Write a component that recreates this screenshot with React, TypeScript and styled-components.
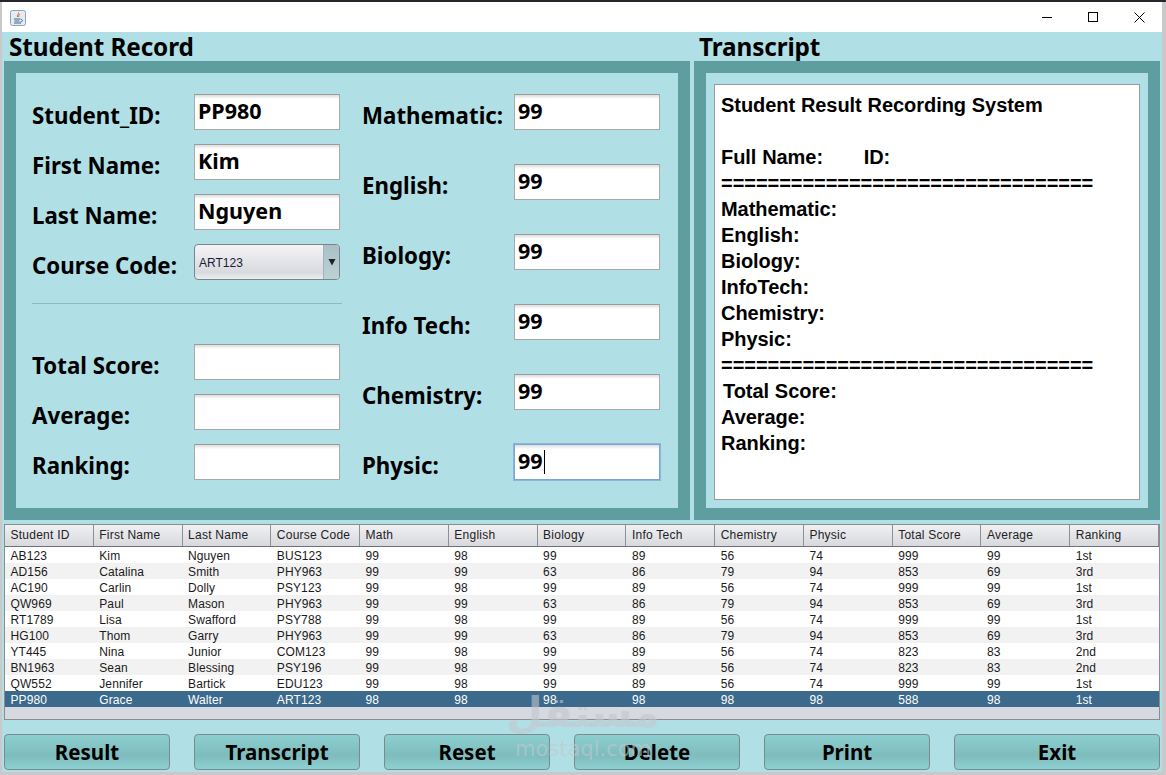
import React, { FC } from 'react';
import styled, { createGlobalStyle } from 'styled-components';

const GlobalStyle = createGlobalStyle`
  html, body {
    margin: 0;
    padding: 0;
    background: #c9c9c9;
    overflow: hidden;
  }
`;

const COLUMNS = [
  'Student ID', 'First Name', 'Last Name', 'Course Code', 'Math', 'English', 'Biology',
  'Info Tech', 'Chemistry', 'Physic', 'Total Score', 'Average', 'Ranking',
];

const ROWS = [
  ['AB123', 'Kim', 'Nguyen', 'BUS123', '99', '98', '99', '89', '56', '74', '999', '99', '1st'],
  ['AD156', 'Catalina', 'Smith', 'PHY963', '99', '99', '63', '86', '79', '94', '853', '69', '3rd'],
  ['AC190', 'Carlin', 'Dolly', 'PSY123', '99', '98', '99', '89', '56', '74', '999', '99', '1st'],
  ['QW969', 'Paul', 'Mason', 'PHY963', '99', '99', '63', '86', '79', '94', '853', '69', '3rd'],
  ['RT1789', 'Lisa', 'Swafford', 'PSY788', '99', '98', '99', '89', '56', '74', '999', '99', '1st'],
  ['HG100', 'Thom', 'Garry', 'PHY963', '99', '99', '63', '86', '79', '94', '853', '69', '3rd'],
  ['YT445', 'Nina', 'Junior', 'COM123', '99', '98', '99', '89', '56', '74', '823', '83', '2nd'],
  ['BN1963', 'Sean', 'Blessing', 'PSY196', '99', '98', '99', '89', '56', '74', '823', '83', '2nd'],
  ['QW552', 'Jennifer', 'Bartick', 'EDU123', '99', '98', '99', '89', '56', '74', '999', '99', '1st'],
  ['PP980', 'Grace', 'Walter', 'ART123', '98', '98', '98', '98', '98', '98', '588', '98', '1st'],
];

const SCORES = [
  { label: 'Mathematic:', value: '99' },
  { label: 'English:', value: '99' },
  { label: 'Biology:', value: '99' },
  { label: 'Info Tech:', value: '99' },
  { label: 'Chemistry:', value: '99' },
  { label: 'Physic:', value: '99', focused: true },
];

const RULE = '================================';

const TRANSCRIPT = [
  'Student Result Recording System',
  '',
  'Full Name:       ID:',
  RULE,
  'Mathematic:',
  'English:',
  'Biology:',
  'InfoTech:',
  'Chemistry:',
  'Physic:',
  RULE,
];

const TOTALS = ['Total Score:', 'Average:', 'Ranking:'];

const BUTTONS = ['Result', 'Transcript', 'Reset', 'Delete', 'Print', 'Exit'];

const Screen = styled.div`
  position: relative;
  width: 1166px;
  height: 775px;
  padding: 2px 4px 0 2px;
  box-sizing: border-box;
  background: linear-gradient(#24262b 2px, #c9c9c9 2px);
  overflow: hidden;
`;

const Window = styled.div`
  display: flex;
  flex-direction: column;
  height: 770px;
  font-family: 'Liberation Sans', Arial, sans-serif;
  color: #000;
`;

const TitleBar = styled.div`
  display: flex;
  align-items: center;
  justify-content: space-between;
  flex: 0 0 30px;
  background: #fff;
`;

const AppIcon = styled.div`
  display: flex;
  margin-left: 8px;
  margin-top: 1px;
`;

const WindowButtons = styled.div`
  display: flex;
`;

const WindowButton = styled.div`
  display: flex;
  align-items: center;
  justify-content: center;
  width: 46px;
  height: 30px;
`;

const Content = styled.div`
  flex: 1;
  display: flex;
  flex-direction: column;
  background: #b0dfe5;
  padding: 0 2px;
`;

const Panels = styled.div`
  display: flex;
  gap: 4px;
`;

const Section = styled.section<{ $width: number }>`
  display: flex;
  flex-direction: column;
  width: ${(p) => p.$width}px;
`;

const Heading = styled.h1`
  margin: 0;
  height: 29px;
  padding-left: 5px;
  font: bold 24.3px/30px 'Noto Sans', sans-serif;
  letter-spacing: -0.1px;
  white-space: nowrap;
`;

const Frame = styled.div`
  height: 435px;
  border: 12px solid #5f9ea0;
  background: #b0dfe5;
`;

const Form = styled.div`
  display: flex;
  gap: 20px;
  padding: 21px 0 0 16px;
`;

const FormColumn = styled.div`
  display: flex;
  flex-direction: column;
  width: 310px;
`;

const ScoreColumn = styled.div`
  display: flex;
  flex-direction: column;
  gap: 34px;
  width: 298px;
`;

const FieldGroup = styled.div`
  display: flex;
  flex-direction: column;
  gap: 14px;
`;

const Field = styled.div`
  display: flex;
  align-items: center;
  height: 36px;
`;

const Label = styled.label<{ $width: number }>`
  width: ${(p) => p.$width}px;
  padding-top: 8px;
  font: bold 22.3px/28px 'Noto Sans', sans-serif;
  white-space: nowrap;
`;

const Input = styled.div<{ $focused?: boolean }>`
  position: relative;
  display: flex;
  align-items: flex-start;
  box-sizing: border-box;
  width: 146px;
  height: 36px;
  padding: 2px 3px;
  border: 1px solid ${(p) => (p.$focused ? '#7aa7d4' : '#a9a9a9')};
  border-top-color: ${(p) => (p.$focused ? '#7aa7d4' : '#9a9a9a')};
  background: linear-gradient(#dcdcdc, #fff 4px);
  box-shadow: ${(p) => (p.$focused ? '0 0 0 1px #8fb4dc' : 'none')};
  font: bold 21.5px/27px 'Noto Sans', sans-serif;
`;

const Caret = styled.span`
  display: block;
  width: 1px;
  height: 24px;
  margin: 3px 0 0 1px;
  background: #000;
`;

const Combo = styled.div`
  display: flex;
  box-sizing: border-box;
  width: 146px;
  height: 36px;
  border: 1px solid #7d8489;
  border-radius: 4px;
  background: linear-gradient(#f4f4f6, #d9dadf 80%, #eceded);
  overflow: hidden;
`;

const ComboText = styled.div`
  flex: 1;
  padding: 1px 0 0 4px;
  font: 12px/34px 'Liberation Sans', Arial, sans-serif;
  color: #1b1b33;
`;

const ComboArrow = styled.div`
  display: flex;
  align-items: center;
  justify-content: center;
  width: 15px;
  border-left: 1px solid #9db5bb;
  background: linear-gradient(#a8c0c6, #bcd2d6);
`;

const Divider = styled.hr`
  width: 310px;
  height: 1px;
  margin: 23px 0 40px;
  border: 0;
  background: #8fb9bd;
`;

const TranscriptPaper = styled.div`
  box-sizing: border-box;
  width: 426px;
  height: 416px;
  margin: 11px 0 0 8px;
  padding: 7px 6px;
  border: 1px solid #9a9a9a;
  background: #fff;
  font: bold 20px/26px 'Liberation Sans', Arial, sans-serif;
  letter-spacing: -0.05px;
  word-spacing: 0.3px;
  white-space: pre;
`;

const TranscriptLine = styled.div<{ $indent?: number }>`
  height: 26px;
  padding-left: ${(p) => p.$indent ?? 0}px;
`;

const TableBox = styled.div`
  display: flex;
  flex-direction: column;
  width: 1156px;
  height: 196px;
  margin-top: 4px;
  border: 1px solid #8c8c8c;
  box-sizing: border-box;
  background: #d6d9df;
  font-family: 'Liberation Sans', Arial, sans-serif;
  font-size: 12px;
`;

const HeaderRow = styled.div`
  display: grid;
  grid-template-columns: repeat(13, 1fr);
  flex: 0 0 21px;
  border-bottom: 1px solid #6f6f78;
  background: linear-gradient(#f0f0f3, #d8d9de);
`;

const HeaderCell = styled.div`
  padding-left: 5.5px;
  border-right: 1px solid #8f8f96;
  line-height: 21px;
  letter-spacing: 0.25px;
  color: #222;
  white-space: nowrap;
  overflow: hidden;
`;

const Row = styled.div<{ $selected: boolean; $striped: boolean }>`
  display: grid;
  grid-template-columns: repeat(13, 1fr);
  height: 16px;
  background: ${(p) => (p.$selected ? '#3b6a8c' : p.$striped ? '#f2f2f2' : '#fff')};
  color: ${(p) => (p.$selected ? '#fff' : '#1a1a1a')};
`;

const Cell = styled.div`
  padding-left: 5.5px;
  line-height: 18px;
  letter-spacing: 0.1px;
  white-space: nowrap;
  overflow: hidden;
`;

const ButtonBar = styled.div`
  display: flex;
  gap: 24px;
  margin-top: 14px;
  width: 1156px;
`;

const ActionButton = styled.button<{ $grow?: boolean }>`
  flex: ${(p) => (p.$grow ? '1' : '0 0 166px')};
  height: 36px;
  padding: 0;
  border: 1px solid #7c8a8c;
  border-radius: 4px;
  background: linear-gradient(#8ccfd0, #7ebcbd 60%, #8ed0d2);
  color: #000;
  font: bold 20.5px/34px 'Noto Sans', sans-serif;
`;

const Watermark = styled.div`
  position: absolute;
  left: 508px;
  top: 688px;
  width: 150px;
  display: flex;
  flex-direction: column;
  align-items: center;
  color: rgba(195, 200, 206, 0.6);
  pointer-events: none;
`;

const WatermarkArabic = styled.div`
  font: bold 42px/50px 'DejaVu Sans', sans-serif;
`;

const WatermarkLatin = styled.div`
  font: 21px/22px 'DejaVu Sans', sans-serif;
`;

const JavaIcon: FC = () => (
  <svg width="16" height="16" viewBox="0 0 16 16">
    <rect x="0.5" y="0.5" width="15" height="15" rx="2" fill="#e4ebf2" stroke="#8fa3b5" />
    <path d="M8.5 2.5c1 1.5-2 2.5-1 4.5M10 4c-1 1-2 1.5-1 3" stroke="#d9641e" strokeWidth="1" fill="none" />
    <path d="M4 9h6.5M4.5 11h5M4 13h7M11 9.5c2 0 2 2-.5 2.5" stroke="#41688f" strokeWidth="1" fill="none" />
  </svg>
);

const MinimizeIcon: FC = () => (
  <svg width="10" height="10" viewBox="0 0 10 10">
    <path d="M0 5.5h10" stroke="#000" strokeWidth="1" />
  </svg>
);

const MaximizeIcon: FC = () => (
  <svg width="10" height="10" viewBox="0 0 10 10">
    <rect x="0.5" y="0.5" width="9" height="9" stroke="#000" fill="none" />
  </svg>
);

const CloseIcon: FC = () => (
  <svg width="11" height="11" viewBox="0 0 11 11">
    <path d="M0.5 0.5l10 10M10.5 0.5l-10 10" stroke="#000" strokeWidth="1" />
  </svg>
);

const ArrowIcon: FC = () => (
  <svg width="8" height="8" viewBox="0 0 8 8">
    <path d="M0.5 1h7L4 7.5z" fill="#222" />
  </svg>
);

const App: FC = () => {
  return (
    <Screen>
      <GlobalStyle />
      <Window>
        <TitleBar>
          <AppIcon>
            <JavaIcon />
          </AppIcon>
          <WindowButtons>
            <WindowButton>
              <MinimizeIcon />
            </WindowButton>
            <WindowButton>
              <MaximizeIcon />
            </WindowButton>
            <WindowButton>
              <CloseIcon />
            </WindowButton>
          </WindowButtons>
        </TitleBar>
        <Content>
          <Panels>
            <Section $width={686}>
              <Heading>Student Record</Heading>
              <Frame>
                <Form>
                  <FormColumn>
                    <FieldGroup>
                      <Field>
                        <Label $width={162}>Student_ID:</Label>
                        <Input>PP980</Input>
                      </Field>
                      <Field>
                        <Label $width={162}>First Name:</Label>
                        <Input>Kim</Input>
                      </Field>
                      <Field>
                        <Label $width={162}>Last Name:</Label>
                        <Input>Nguyen</Input>
                      </Field>
                      <Field>
                        <Label $width={162}>Course Code:</Label>
                        <Combo>
                          <ComboText>ART123</ComboText>
                          <ComboArrow>
                            <ArrowIcon />
                          </ComboArrow>
                        </Combo>
                      </Field>
                    </FieldGroup>
                    <Divider />
                    <FieldGroup>
                      <Field>
                        <Label $width={162}>Total Score:</Label>
                        <Input />
                      </Field>
                      <Field>
                        <Label $width={162}>Average:</Label>
                        <Input />
                      </Field>
                      <Field>
                        <Label $width={162}>Ranking:</Label>
                        <Input />
                      </Field>
                    </FieldGroup>
                  </FormColumn>
                  <ScoreColumn>
                    {SCORES.map((score) => (
                      <Field key={score.label}>
                        <Label $width={152}>{score.label}</Label>
                        <Input $focused={score.focused}>
                          {score.value}
                          {score.focused ? <Caret /> : null}
                        </Input>
                      </Field>
                    ))}
                  </ScoreColumn>
                </Form>
              </Frame>
            </Section>
            <Section $width={466}>
              <Heading>Transcript</Heading>
              <Frame>
                <TranscriptPaper>
                  {TRANSCRIPT.map((line, i) => (
                    <TranscriptLine key={i}>{line}</TranscriptLine>
                  ))}
                  {TOTALS.map((line) => (
                    <TranscriptLine key={line} $indent={line === 'Total Score:' ? 2 : 0}>
                      {line}
                    </TranscriptLine>
                  ))}
                </TranscriptPaper>
              </Frame>
            </Section>
          </Panels>
          <TableBox>
            <HeaderRow>
              {COLUMNS.map((col) => (
                <HeaderCell key={col}>{col}</HeaderCell>
              ))}
            </HeaderRow>
            {ROWS.map((row, i) => (
              <Row key={row[0]} $selected={i === ROWS.length - 1} $striped={i % 2 === 1}>
                {row.map((cell, j) => (
                  <Cell key={j}>{cell}</Cell>
                ))}
              </Row>
            ))}
          </TableBox>
          <ButtonBar>
            {BUTTONS.map((label) => (
              <ActionButton key={label} $grow={label === 'Exit'}>
                {label}
              </ActionButton>
            ))}
          </ButtonBar>
        </Content>
      </Window>
      <Watermark>
        <WatermarkArabic>مستقل</WatermarkArabic>
        <WatermarkLatin>mostaql.com</WatermarkLatin>
      </Watermark>
    </Screen>
  );
};

export default App;
